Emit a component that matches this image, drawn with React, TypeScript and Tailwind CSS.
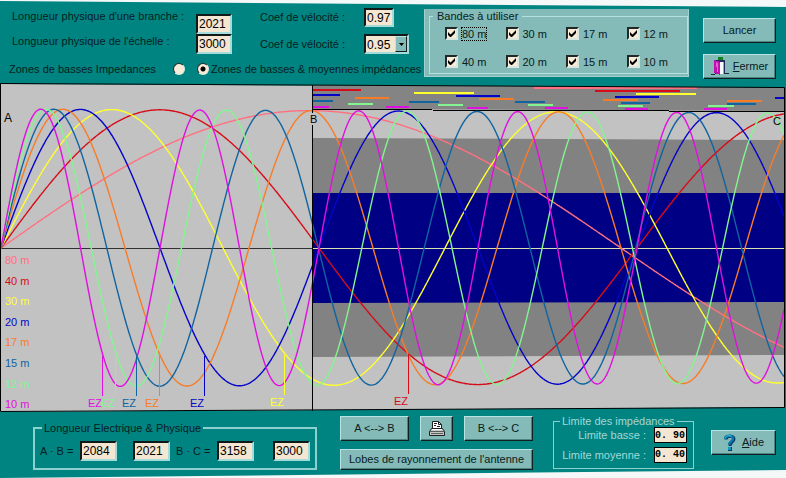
import type { ReactNode } from 'react';

const bands = [
  { name: '80 m', color: '#ff7080', half: 620, labelY: 264 },
  { name: '40 m', color: '#d80c18', half: 318, labelY: 285 },
  { name: '30 m', color: '#ffff30', half: 222, labelY: 305 },
  { name: '20 m', color: '#0404c8', half: 159, labelY: 326 },
  { name: '17 m', color: '#f87c28', half: 124, labelY: 346 },
  { name: '15 m', color: '#1064a0', half: 105.8, labelY: 367 },
  { name: '12 m', color: '#84f490', half: 90.2, labelY: 388 },
  { name: '10 m', color: '#e010e0', half: 79.5, labelY: 408 },
];

const [pink, red, yellow, blue, orange, teal, green, magenta] = bands.map((b) => b.color);

// Feed points: x, curve y, colour
const feeds: [number, number, string][] = [
  [102, 356, magenta],
  [115, 356, green],
  [136, 356, teal],
  [159, 356, orange],
  [204, 356, blue],
  [284, 355, yellow],
  [408, 354, red],
];

// Low impedance ranges: x1, x2, y, colour
const ranges: [number, number, number, string][] = [
  [313, 361, 90, red],
  [595, 680, 91, red],
  [534, 697, 88, pink],
  [414, 474, 93, yellow],
  [636, 696, 94, yellow],
  [313, 340, 95, blue],
  [456, 500, 96, blue],
  [615, 659, 97, blue],
  [775, 784, 98, blue],
  [355, 389, 98, orange],
  [479, 514, 99, orange],
  [603, 638, 100, orange],
  [727, 762, 101, orange],
  [313, 333, 101, teal],
  [409, 439, 102, teal],
  [515, 545, 102, teal],
  [621, 650, 103, teal],
  [727, 756, 104, teal],
  [348, 373, 104, green],
  [438, 463, 105, green],
  [528, 553, 105, green],
  [618, 643, 106, green],
  [708, 734, 106, green],
  [313, 329, 107, magenta],
  [386, 409, 107, magenta],
  [467, 488, 108, magenta],
  [545, 568, 108, magenta],
  [625, 648, 109, magenta],
  [704, 727, 109, magenta],
];

function wave(half: number) {
  const points: string[] = [];
  for (let x = 1; x <= 784; x += 1) {
    const amplitude = 139 - (4 * x) / 785;
    const y = 248 - amplitude * Math.sin((Math.PI * (x - 1)) / half);
    points.push(`${x},${y.toFixed(1)}`);
  }
  return points.join(' ');
}

function Chart() {
  return (
    <svg viewBox="0 80 786 335" className="block w-full h-auto" fontFamily='"Liberation Sans", Arial, sans-serif' fontSize="11">
      <polygon points="0,84 785,88 785,407 0,412" fill="#c2c2c2" />
      <polygon points="313,85 785,88 785,111 313,109" fill="#848484" />
      <polygon points="313,138 785,140 785,355 313,357" fill="#828282" />
      <polygon points="313,193 785,193 785,302 313,303" fill="#000084" />

      {ranges.map(([x1, x2, y, color]) => (
        <rect key={`${x1}-${y}`} x={x1} y={y - 1} width={x2 - x1} height="2" fill={color} />
      ))}

      <g shapeRendering="crispEdges" fill="none" stroke="#000">
        <line x1="313" y1="109.5" x2="785" y2="111.5" />
        <line x1="0" y1="248.5" x2="313" y2="248.5" stroke="#303030" />
        <line x1="313" y1="248.5" x2="785" y2="248.5" stroke="#d8e0b0" />
      </g>

      <g fill="none" strokeWidth="1.4">
        {bands.map((band) => (
          <polyline key={band.name} points={wave(band.half)} stroke={band.color} />
        ))}
      </g>

      <g fill="none" stroke="#000">
        <line x1="312.5" y1="85" x2="312.5" y2="411" />
        <polygon points="0.5,83.5 784.5,87.5 784.5,407.5 0.5,411.5" />
      </g>

      {bands.map((band) => (
        <text key={band.name} x="5" y={band.labelY} fill={band.color}>{band.name}</text>
      ))}

      {feeds.map(([x, y, color]) => (
        <g key={x}>
          <rect x={x} y={y} width="1" height="40" fill={color} />
          <text x={x - 14} y={y + 51} fill={color}>EZ</text>
        </g>
      ))}

      <rect x="310" y="113" width="7" height="12" fill="#c2c2c2" />
      <text x="4" y="122" fontSize="12">A</text>
      <text x="310" y="123">B</text>
      <text x="773" y="125">C</text>
    </svg>
  );
}

const sunken = 'block bg-[#f4e6d0] border-2 border-t-[#101818] border-l-[#101818] border-b-[#a4dcdc] border-r-[#a4dcdc] text-[12px] text-black outline-none';

function Field({ label, value, className }: { label: string; value: string; className: string }) {
  return <input aria-label={label} defaultValue={value} className={`${sunken} pl-px ${className}`} />;
}

function Button({ children, className, label }: { children: ReactNode; className: string; label?: string }) {
  return (
    <button
      aria-label={label}
      className={`flex items-center justify-center bg-[#84bab8] border border-t-[#b8e4e4] border-l-[#b8e4e4] border-b-[#102020] border-r-[#102020] shadow-[inset_-1px_-1px_0_#4c8484] ${className}`}
    >
      {children}
    </button>
  );
}

function Band({ name, focused }: { name: string; focused?: boolean }) {
  return (
    <label className="flex items-center gap-1">
      <span className="relative block size-[13px]">
        <input
          type="checkbox"
          defaultChecked
          className="peer block size-[13px] appearance-none bg-[#f8ecd8] border-2 border-t-[#202828] border-l-[#202828] border-b-[#d8e8e0] border-r-[#d8e8e0]"
        />
        <svg viewBox="0 0 13 13" className="absolute inset-0 hidden peer-checked:block pointer-events-none">
          <path d="M3 5v3l2 2h1l4-4V3L5.500 7.500z" fill="#000" />
        </svg>
      </span>
      <span className={focused ? 'leading-3 outline-1 outline-dotted outline-black' : 'leading-3'}>{name}</span>
    </label>
  );
}

function DoorIcon() {
  return (
    <svg viewBox="0 0 18 20" className="w-[18px] h-5" shapeRendering="crispEdges">
      <path d="M0 17h4v-1h14v1H4v1H0z" fill="#103030" />
      <rect x="7" y="0" width="5" height="3" fill="#108020" />
      <path d="M4 3h10v14h-2V5H4z" fill="#282860" />
      <path d="M3 3l6 2v13l-6-2z" fill="#c010b0" />
      <path d="M5 5l2 1v10l-1-1z" fill="#e060d0" />
      <path d="M9 5h4v12H9z" fill="#f4fcfc" />
      <path d="M12 5h1v12h-1z" fill="#40d0e0" />
    </svg>
  );
}

function PrinterIcon() {
  return (
    <svg viewBox="0 0 18 17" className="w-[18px] h-[17px]">
      <path d="M4.500 8.500v-7h6l3 3v4z" fill="#fff" stroke="#202020" />
      <path d="M10.500 1.500v3h3M6 3.500h3M6 5.500h2M9 6.500h3" fill="none" stroke="#202020" />
      <path d="M3.500 8.500h11l2 3v4h-15v-4z" fill="#c4c8c0" stroke="#202020" />
      <path d="M2 11.500h14M3 13.500h12" stroke="#586060" />
      <path d="M4 9.500h10" stroke="#fff" />
    </svg>
  );
}

function HelpIcon() {
  return (
    <svg viewBox="0 0 13 17" className="w-[13px] h-[17px]" fill="none">
      <path d="M3 5.500C3 1.500 11 1 11 5c0 3-4 3-4 7" stroke="#083868" strokeWidth="3" />
      <path d="M2 5C2 1 10 0.500 10 4.500c0 3-4 3-4 6.500" stroke="#0878a8" strokeWidth="2.400" />
      <path d="M2 4.500C3 1.500 7 1 8.500 2.500" stroke="#30c8e0" />
      <rect x="5" y="13" width="4" height="4" fill="#083868" />
      <rect x="5" y="13" width="3" height="3" fill="#0898c0" />
    </svg>
  );
}

function Header() {
  return (
    <header className="flex h-20 items-start">
      <div className="w-[424px] shrink-0 whitespace-nowrap">
        <div className="flex h-[60px] items-start">
          <div className="w-[196px] pl-3 pt-1 leading-[25px]">
            <div>Longueur physique d'une branche :</div>
            <div>Longueur physique de l'échelle :</div>
          </div>
          <div className="w-16 pt-3.5">
            <Field label="Longueur physique d'une branche" value="2021" className="w-9 h-5" />
            <Field label="Longueur physique de l'échelle" value="3000" className="w-9 h-5" />
          </div>
          <div className="w-[104px] pt-1 leading-[27px]">
            <div>Coef de vélocité :</div>
            <div>Coef de vélocité :</div>
          </div>
          <div className="pt-2">
            <Field label="Coef de vélocité de la branche" value="0.97" className="w-[30px] h-[19px]" />
            <div className="relative mt-[7px]">
              <select aria-label="Coef de vélocité de l'échelle" defaultValue="0.95" className={`${sunken} w-[45px] h-5 pl-px appearance-none`}>
                <option>0.95</option>
              </select>
              <span className="absolute right-0.5 top-0.5 flex h-4 w-3 items-center justify-center bg-[#84bab8] border border-t-[#b8e4e4] border-l-[#b8e4e4] border-b-[#102020] border-r-[#102020] pointer-events-none">
                <svg viewBox="0 0 5 3" className="w-[5px] h-[3px]"><path d="M0 0h5L2.500 3z" /></svg>
              </span>
            </div>
          </div>
        </div>
        <div className="flex items-center pl-[9px] leading-[18px]">
          <label htmlFor="low" className="w-[164px]">Zones de basses Impedances</label>
          <input id="low" type="radio" name="zones" className="size-3 appearance-none rounded-full bg-[#f8ecd8] checked:bg-[radial-gradient(circle,#000_2px,#f8ecd8_3px)] border border-t-[#202828] border-l-[#202828] border-b-[#d8e8e0] border-r-[#d8e8e0]" />
          <input
            id="mid"
            type="radio"
            name="zones"
            defaultChecked
            className="ml-3 size-3 appearance-none rounded-full bg-[#f8ecd8] checked:bg-[radial-gradient(circle,#000_2px,#f8ecd8_3px)] border border-t-[#202828] border-l-[#202828] border-b-[#d8e8e0] border-r-[#d8e8e0]"
          />
          <label htmlFor="mid" className="ml-0.5">Zones de basses &amp; moyennes impédances</label>
        </div>
      </div>

      <div className="mt-[9px] h-[68px] w-[265px] shrink-0 bg-[#84bab8] pl-1 pb-0.5 border border-[#a0d0d0] border-t-[#84bab8]">
        <fieldset className="h-full border border-[#b4e0e0] pl-[15px]">
          <legend className="-ml-3 px-1 leading-3">Bandes à utiliser</legend>
          <div className="grid grid-cols-4 gap-y-[15px] pt-[5px]">
            <Band name="80 m" focused />
            <Band name="30 m" />
            <Band name="17 m" />
            <Band name="12 m" />
            <Band name="40 m" />
            <Band name="20 m" />
            <Band name="15 m" />
            <Band name="10 m" />
          </div>
        </fieldset>
      </div>

      <div className="ml-3.5 mt-[18px] flex flex-col gap-[11px]">
        <Button className="w-[73px] h-[25px]">Lancer</Button>
        <Button className="w-[73px] h-[25px] gap-1">
          <DoorIcon />
          <span><u>F</u>ermer</span>
        </Button>
      </div>
    </header>
  );
}

function Footer() {
  return (
    <footer className="flex h-[63px] items-start pl-[33px] whitespace-nowrap">
      <fieldset className="mt-1.5 h-[49px] w-[284px] shrink-0 border-2 border-[#8cd0d0] px-[5px]">
        <legend className="ml-0.5 px-0.5 leading-[14px]">Longueur Electrique &amp; Physique</legend>
        <div className="flex items-center pt-1.5">
          <span className="w-10">A · B =</span>
          <Field label="A - B électrique" value="2084" className="w-[37px] h-5" />
          <Field label="A - B physique" value="2021" className="ml-4 w-[37px] h-5" />
          <span className="ml-1.5 w-[41px]">B · C =</span>
          <Field label="B - C électrique" value="3158" className="w-[37px] h-5" />
          <Field label="B - C physique" value="3000" className="ml-[19px] w-[37px] h-5" />
        </div>
      </fieldset>

      <div className="ml-[23px] mt-px w-[193px] shrink-0">
        <div className="flex justify-between">
          <Button className="w-[69px] h-[25px]">A &lt;--&gt; B</Button>
          <Button className="w-[33px] h-[25px]" label="Imprimer"><PrinterIcon /></Button>
          <Button className="w-[69px] h-[25px]">B &lt;--&gt; C</Button>
        </div>
        <Button className="mt-2 w-full h-[21px]">Lobes de rayonnement de l'antenne</Button>
      </div>

      <fieldset className="ml-5 h-[54px] w-[141px] shrink-0 border border-[#8cd0d0] px-1.5 text-[#a4d8d4]">
        <legend className="px-0.5 leading-3">Limite des impédances</legend>
        <label className="flex items-center justify-end">
          <span className="w-[92px] pr-2 text-right">Limite basse :</span>
          <input defaultValue="0. 90" className="w-[33px] h-4 bg-[#f4e6d0] border border-black text-black text-[10px] font-bold font-['Liberation_Mono',monospace]" />
        </label>
        <label className="mt-[3px] flex items-center justify-end">
          <span className="w-[92px] pr-2 text-right">Limite moyenne :</span>
          <input defaultValue="0. 40" className="w-[33px] h-4 bg-[#f4e6d0] border border-black text-black text-[10px] font-bold font-['Liberation_Mono',monospace]" />
        </label>
      </fieldset>

      <Button className="ml-[17px] mt-[15px] w-[65px] h-[25px] gap-1.5">
        <HelpIcon />
        <span><u>A</u>ide</span>
      </Button>
    </footer>
  );
}

export default function App() {
  return (
    <div className="relative min-h-screen bg-[#f4f8f8] font-['Liberation_Sans',Arial,sans-serif] text-[11px] text-[#082020]">
      <div className="absolute inset-0 bg-[#008482] [clip-path:polygon(0_1px,100%_7px,100%_calc(100%_-_8px),0_100%)]"></div>
      <div className="relative">
        <Header />
        <Chart />
        <Footer />
      </div>
    </div>
  );
}
